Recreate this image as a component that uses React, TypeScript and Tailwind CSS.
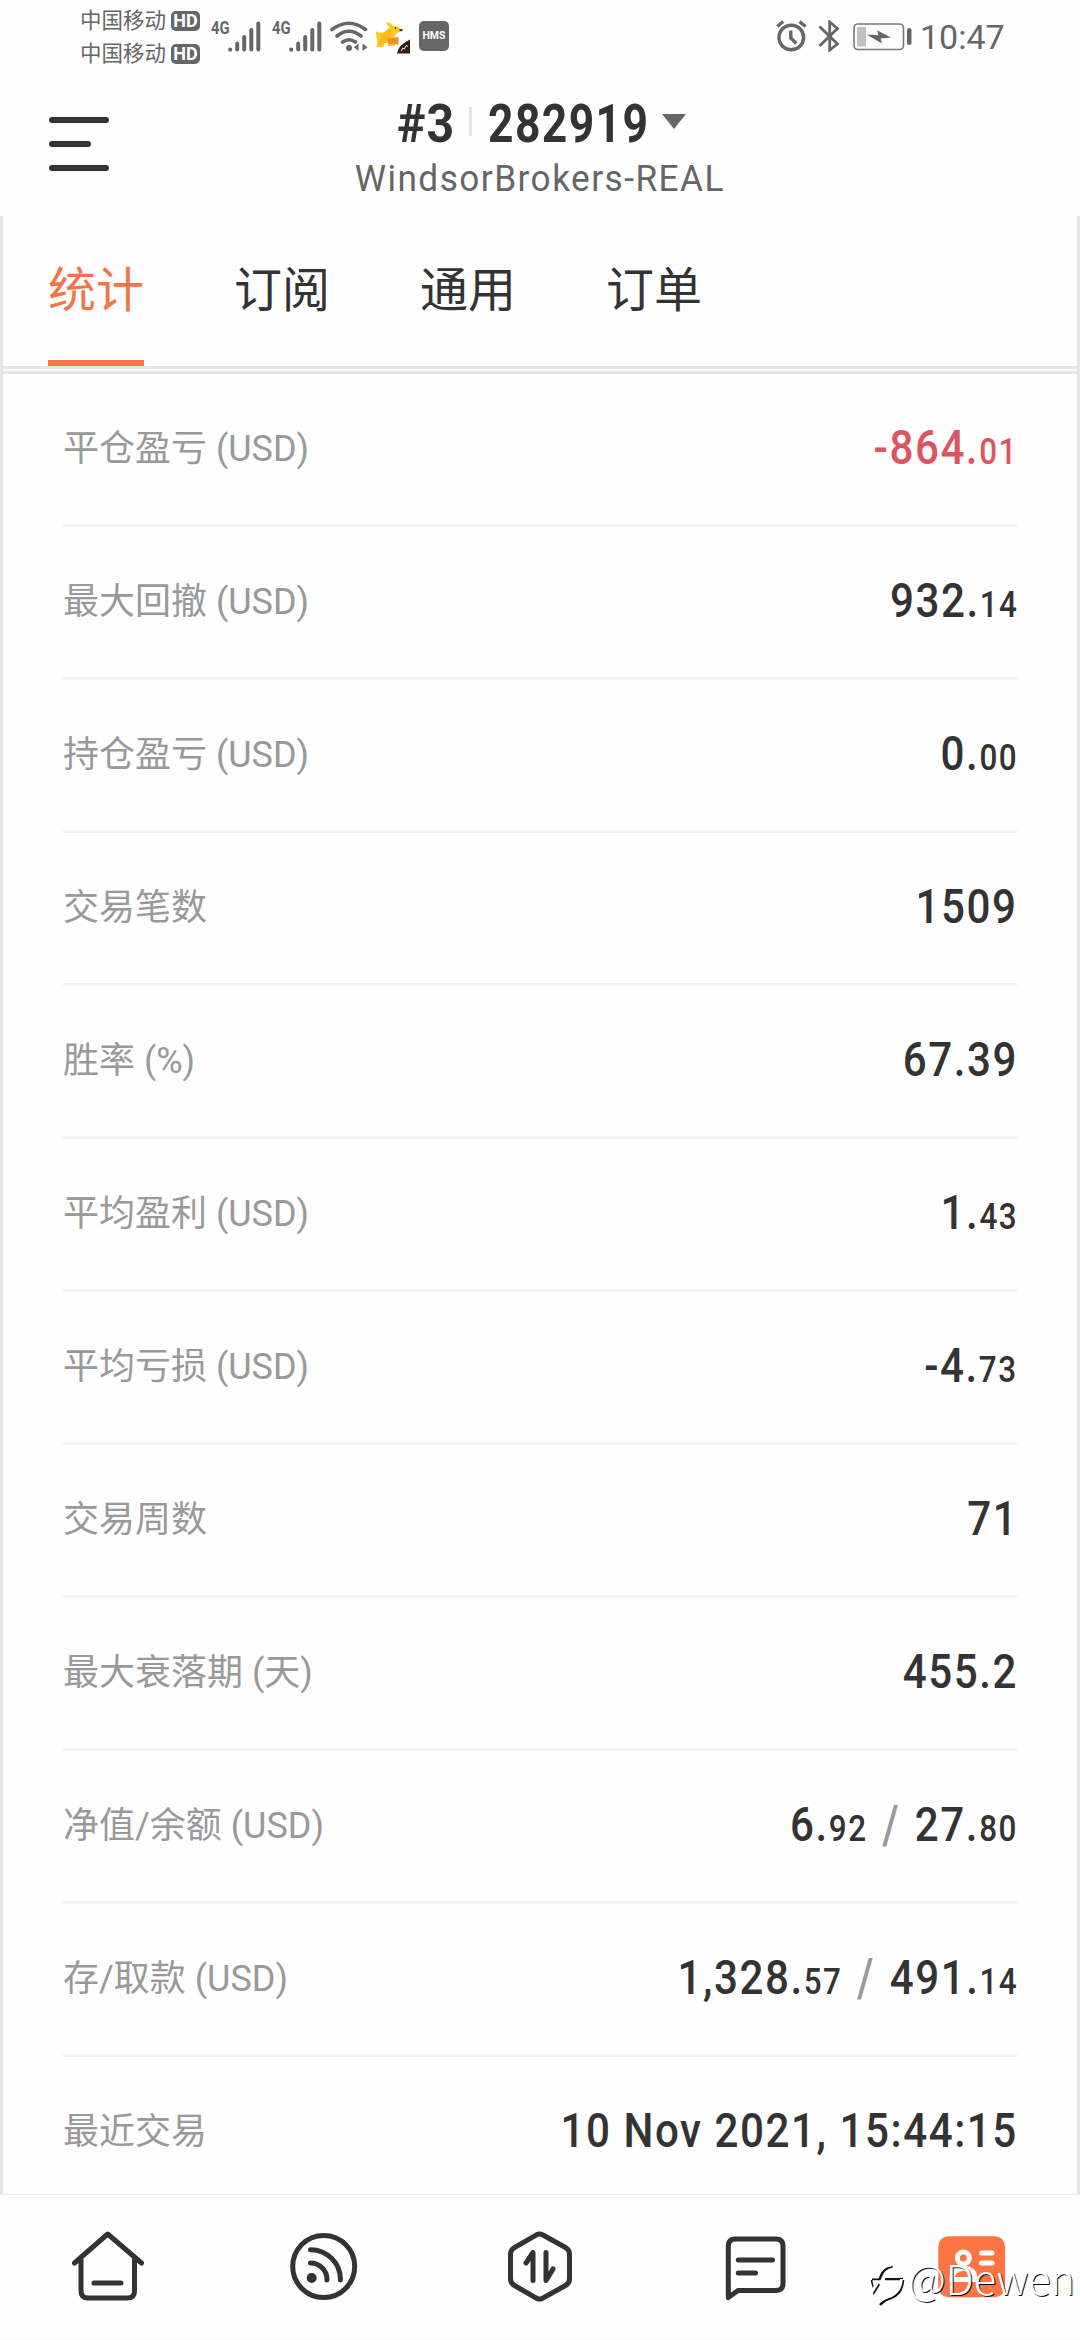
import React from "react";

type Part = { whole: string; frac?: string };
type Row = { label: string; parts: Part[]; negative?: boolean };

const rows: Row[] = [
  { label: "平仓盈亏 (USD)", parts: [{ whole: "-864.", frac: "01" }], negative: true },
  { label: "最大回撤 (USD)", parts: [{ whole: "932.", frac: "14" }] },
  { label: "持仓盈亏 (USD)", parts: [{ whole: "0.", frac: "00" }] },
  { label: "交易笔数", parts: [{ whole: "1509" }] },
  { label: "胜率 (%)", parts: [{ whole: "67.39" }] },
  { label: "平均盈利 (USD)", parts: [{ whole: "1.", frac: "43" }] },
  { label: "平均亏损 (USD)", parts: [{ whole: "-4.", frac: "73" }] },
  { label: "交易周数", parts: [{ whole: "71" }] },
  { label: "最大衰落期 (天)", parts: [{ whole: "455.2" }] },
  { label: "净值/余额 (USD)", parts: [{ whole: "6.", frac: "92" }, { whole: "27.", frac: "80" }] },
  { label: "存/取款 (USD)", parts: [{ whole: "1,328.", frac: "57" }, { whole: "491.", frac: "14" }] },
  { label: "最近交易", parts: [{ whole: "10 Nov 2021, 15:44:15" }] },
];

function Carrier() {
  return (
    <div className="flex h-[33px] items-center">
      <span className="w-[91px] text-[21.5px] leading-none whitespace-nowrap">中国移动</span>
      <span className="flex h-[20px] w-[29px] items-center justify-center rounded-[5px] bg-[#666] text-[18px] leading-none font-bold text-white">
        HD
      </span>
    </div>
  );
}

function Signal() {
  return (
    <div className="flex h-[31px] w-[61px]">
      <span className="w-[17px] origin-left scale-x-[0.8] text-[18.5px] leading-[14px] font-bold">4G</span>
      <svg width="33" height="31" viewBox="0 0 33 31" fill="none" stroke="#666" strokeWidth="4" strokeLinecap="round">
        <path d="M2.2 28.6v.1M9.2 28.6v-6M16.2 28.6V16M23.3 28.6V9M30.3 28.6V2.5" />
      </svg>
    </div>
  );
}

function StatusBar() {
  return (
    <div className="flex h-[75px] text-[#666]">
      <div className="ml-[80px] flex w-[131px] flex-col pt-[4px]">
        <Carrier />
        <Carrier />
      </div>
      <div className="flex w-[565px] pt-[21px]">
        <Signal />
        <Signal />
        <svg className="-ml-[4px] shrink-0" width="40" height="31" viewBox="0 0 40 31" fill="none" stroke="#666" strokeWidth="3.6" strokeLinecap="round">
          <path d="M3 8.500Q20 -4 36.500 8.500M8 15Q20 5.500 32 15M13.500 21Q20 16.500 26.500 21" />
          <circle cx="20" cy="27" r="3" fill="#666" stroke="none" />
          <path d="M29.500 22.500v7.500l-4.500-3.700zM33.500 22.500v7.500l5-3.700z" fill="#666" stroke="none" />
        </svg>
        <svg className="ml-[6px] shrink-0" width="36" height="33" viewBox="0 0 36 33">
          <path d="M.5 10l3 1.500h5.500l5.500-4.500-3.500-4.500 1.500-1.200 3.500 1 1.500 2.500 5 1 4.500 3.200-.5 1.500-5 1.500-2.500 4V22H10l-2 4H1.500l1-4z" fill="#fccb1f" />
          <path d="M9 11.500l5.500-4.500 2 4-1.500 5-5 5.500-7 2z" fill="#f9b916" />
          <path d="M12.500 17.500l11-1.500v7.500h-10z" fill="#f28c2b" />
          <path d="M12.500 23h7.500v2h-7z" fill="#fccb1f" />
          <path d="M24.500 9h3" stroke="#50330f" strokeWidth="2" />
          <circle cx="20.500" cy="7" r=".9" fill="#50330f" />
          <path d="M22 32.500Q23 24 35 18.500v14z" fill="#321d14" />
          <path d="M26.500 30l1-3 2 1 1.500-3.500 2 1" fill="none" stroke="#fff" strokeWidth=".9" />
        </svg>
        <span className="ml-[8px] flex size-[30px] shrink-0 items-center justify-center rounded-[5px] bg-[#666] text-[10px] leading-none font-bold text-white">
          <span className="scale-x-[1.05]">HMS</span>
        </span>
      </div>
      <div className="flex pt-[20px]">
        <svg width="31" height="32" viewBox="0 0 31 32" fill="none" stroke="#666" strokeWidth="3.400">
          <circle cx="15.300" cy="17.500" r="12.300" />
          <path d="M14.800 10.500v7.500l5.500 5.500" />
          <path d="M1.200 6.500l6-5M23.500 1.500l6 5" />
        </svg>
        <svg className="ml-[11px]" width="22" height="33" viewBox="0 0 22 33" fill="none" stroke="#666" strokeWidth="2.800">
          <path d="M1.500 6.500L19.500 24l-7.800 6V2l7.800 6.500L1.500 26" />
        </svg>
        <svg className="ml-[13px]" width="59" height="33" viewBox="0 0 59 33">
          <rect x="1" y="4" width="49.500" height="25.500" rx="4" fill="none" stroke="#777" strokeWidth="1.600" />
          <rect x="4" y="7" width="9" height="19.500" rx="1" fill="#c1c1c1" />
          <path d="M13.500 14.500l12 .7-1.500-5L38 17.500l-10.500 1 1.500 5z" fill="#666" />
          <rect x="54" y="8" width="4.500" height="17" rx="2.200" fill="#666" />
        </svg>
        <span className="ml-[8px] text-[34px] leading-[34px]">10:47</span>
      </div>
    </div>
  );
}

function Header() {
  return (
    <div className="grid h-[141px] grid-cols-[48px_1fr_48px]">
      <div className="flex w-[61px] translate-x-[49px] flex-col gap-[18px] pt-[42px]">
        <i className="h-[6px] w-[60px] rounded-full bg-[#333]" />
        <i className="h-[6px] w-[42px] rounded-full bg-[#333]" />
        <i className="h-[6px] w-[60px] rounded-full bg-[#333]" />
      </div>
      <div className="flex flex-col items-center">
        <div className="mt-[22px] ml-[4px] flex h-[54px] w-[290px] text-[#333]">
          <span className="w-[72px] origin-left scale-x-[0.9] text-[53.500px] leading-[54px] font-bold tracking-[1px]">#3</span>
          <i className="mt-[10px] h-[29px] w-[3px] bg-[#e5e5e5]" />
          <span className="ml-[16px] w-[174px] origin-left scale-x-[0.83] text-[53.500px] leading-[54px] font-bold tracking-[1.700px]">282919</span>
          <svg className="mt-[17px] shrink-0" width="24" height="15">
            <path d="M0 0h24L12 15z" fill="#666" />
          </svg>
        </div>
        <div className="mt-[6px] text-[36.500px] leading-[44px] tracking-[1.500px] whitespace-nowrap text-[#666]">
          <span className="inline-block scale-x-[0.965] font-[450]">WindsorBrokers-REAL</span>
        </div>
      </div>
    </div>
  );
}

function Amount({ part }: { part: Part }) {
  return (
    <span>
      {part.whole}
      {part.frac && <span className="text-[36.500px] leading-none">{part.frac}</span>}
    </span>
  );
}

function StatRow({ row, last }: { row: Row; last: boolean }) {
  return (
    <div className={`flex h-[153px] shrink-0 items-center justify-between border-b-[3px] ${last ? "border-transparent" : "border-[#f2f2f2]"}`}>
      <span className="text-[36px] leading-[50px] whitespace-nowrap text-[#999]">{row.label}</span>
      <span
        className={`mb-[3px] inline-block origin-right translate-x-[1px] scale-x-[0.86] text-[49px] leading-[56px] font-medium tracking-[1.800px] whitespace-nowrap ${row.negative ? "text-[#dc5563]" : "text-[#333]"}`}
      >
        {row.parts.map((part, i) => (
          <React.Fragment key={i}>
            {i > 0 && <span className="mx-[17px] inline-block scale-y-[1.1] text-[#999]">/</span>}
            <Amount part={part} />
          </React.Fragment>
        ))}
      </span>
    </div>
  );
}

function NavIcon({ children }: { children: React.ReactNode }) {
  return (
    <div className="flex items-center justify-center">
      <svg width="80" height="80" viewBox="0 0 80 80" fill="none" stroke="#333" strokeWidth="5" strokeLinecap="round" strokeLinejoin="round">
        {children}
      </svg>
    </div>
  );
}

function BottomNav() {
  return (
    <nav className="relative grid h-[143px] grid-cols-5 border-t border-[#eee] bg-[#fefefe]">
      <NavIcon>
        <path d="M6.500 37L39.700 8 73.500 37M13 33v32q0 7 7 7h39.500q7 0 7-7V33M26 57h27" />
      </NavIcon>
      <NavIcon>
        <circle cx="39.700" cy="40.500" r="31" />
        <path d="M26.500 23.700A30 30 0 0 1 56.500 54M26.500 37A16.500 16.500 0 0 1 43 54" />
        <circle cx="27.700" cy="52" r="5" fill="#333" stroke="none" />
      </NavIcon>
      <NavIcon>
        <path d="M36.500 8.800q3-1.700 6 0L65.500 21.500q4 2.200 4 6.500v25q0 4.300-4 6.500L42.500 72.200q-3 1.700-6 0L14.500 59.500q-4-2.200-4-6.500V28q0-4.300 4-6.500z" />
        <path d="M26 37l7-10.500v28M46 26.500v28L53 43" />
      </NavIcon>
      <NavIcon>
        <path d="M12.300 71.500V20q0-7 7-7H60q7 0 7 7v37.500q0 7-7 7H22zM22.300 34h34.200M22.300 47h17.200" />
      </NavIcon>
      <NavIcon>
        <rect x="6.300" y="10.300" width="66.700" height="61" rx="10" fill="#ff7444" stroke="none" />
        <circle cx="31.300" cy="32" r="6" stroke="#fff" />
        <path d="M20 53.500q0-11 11.500-11t11.500 11z" stroke="#fff" />
        <path d="M49.500 27H60M49.500 37H60" stroke="#fff" />
      </NavIcon>
      <div className="absolute top-[57px] left-[866px] flex items-center">
        <svg className="w-[42px] shrink-0 overflow-visible" width="42" height="50" viewBox="0 0 42 50" fill="none">
          <path d="M6 27h7.500q4-12 13-12.500M19 27h18M37 28q-1 14-12 18-6 1.500-11 7M5 28q1 6 3 12l5-8" stroke="#111" strokeWidth="2.600" />
          <path d="M4 25h7.500q4-12 14-12M17 24.500h17M35.500 27q-1 13-12 17.500-6 1.500-11 6M3 27q1 6 3.500 12l5-8" stroke="#fff" strokeWidth="2.800" />
        </svg>
        <span className="w-[170px] font-['Noto_Sans_CJK_SC','Noto_Sans',sans-serif] text-[41.500px] leading-[50px] font-light text-white [text-shadow:1px_1px_0.500px_#111]">
          @Dewen
        </span>
      </div>
    </nav>
  );
}

export default function App() {
  const tabs = ["统计", "订阅", "通用", "订单"];
  return (
    <div className="flex h-[2340px] w-[1080px] flex-col overflow-hidden bg-[#fefefe] font-['Roboto','Noto_Sans_CJK_SC',sans-serif]">
      <StatusBar />
      <Header />
      <main className="flex h-[1978px] flex-col overflow-hidden border-x-[3px] border-[#e5e5e5]">
        <div className="flex h-[153px] shrink-0 gap-[90px] border-b-[3px] border-[#e5e5e5] pl-[45px]">
          {tabs.map((tab, i) => (
            <div
              key={tab}
              className={`flex w-[96px] justify-center border-b-[6px] pt-[40px] text-[48px] leading-[70px] whitespace-nowrap ${i === 0 ? "border-[#ff7444] text-[#f0764a]" : "border-transparent text-[#333]"}`}
            >
              {tab}
            </div>
          ))}
        </div>
        <div className="mt-[2px] flex flex-col border-t-[3px] border-[#e5e5e5] px-[60px]">
          {rows.map((row, i) => (
            <StatRow key={row.label} row={row} last={i === rows.length - 1} />
          ))}
        </div>
      </main>
      <BottomNav />
      <div className="h-[3px] bg-[#fafafa]" />
    </div>
  );
}
